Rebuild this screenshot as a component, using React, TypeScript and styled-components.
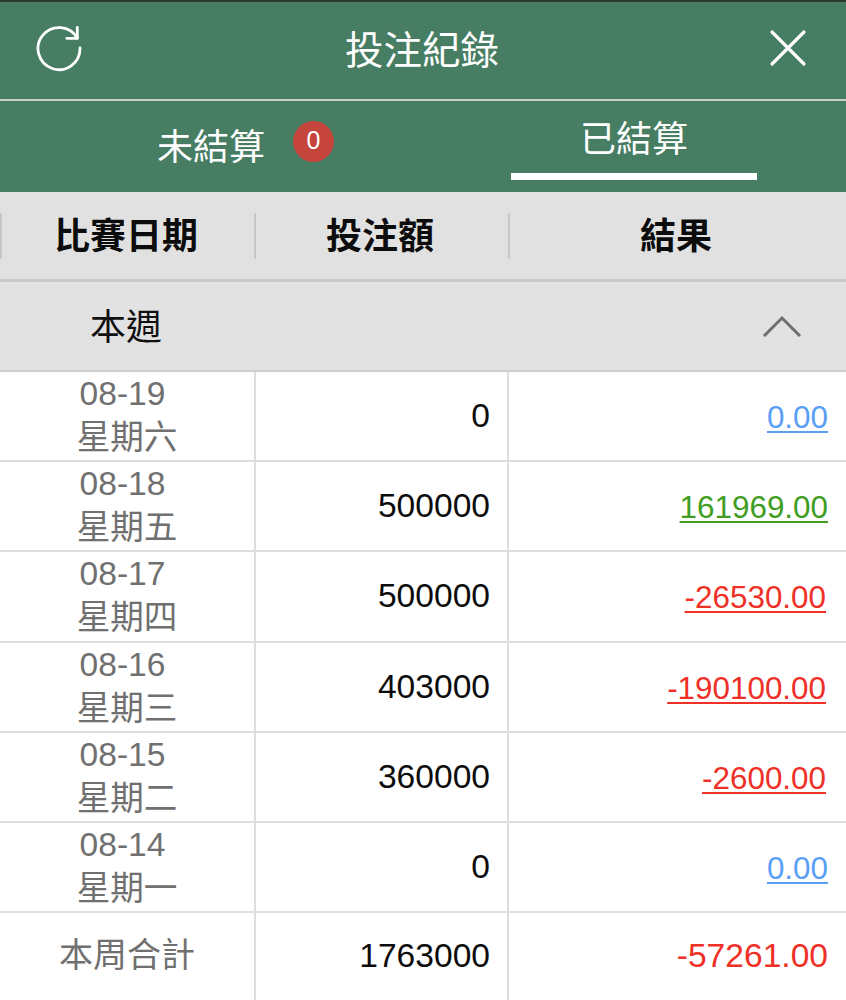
import React from 'react';
import styled, { createGlobalStyle } from 'styled-components';

const FONT = '"Liberation Sans", "Noto Sans CJK TC", sans-serif';

const GlobalStyle = createGlobalStyle`
  html, body {
    margin: 0;
    padding: 0;
    background: #ffffff;
    font-family: ${FONT};
  }
`;

const RowList = [
  { date: '08-19', day: '星期六', amount: '0', result: '0.00', tone: 'zero' },
  { date: '08-18', day: '星期五', amount: '500000', result: '161969.00', tone: 'win' },
  { date: '08-17', day: '星期四', amount: '500000', result: '-26530.00', tone: 'loss' },
  { date: '08-16', day: '星期三', amount: '403000', result: '-190100.00', tone: 'loss' },
  { date: '08-15', day: '星期二', amount: '360000', result: '-2600.00', tone: 'loss' },
  { date: '08-14', day: '星期一', amount: '0', result: '0.00', tone: 'zero' },
];

const toneColor: Record<string, string> = {
  zero: '#5a9ff5',
  win: '#3f9e22',
  loss: '#ef3026',
};

const App = () => (
  <Container>
    <GlobalStyle />
    <TopBar>
      <IconButton>
        <svg width="48" height="48" viewBox="0 0 48 48" fill="none" stroke="#fff" strokeWidth="2.8" strokeLinecap="round" strokeLinejoin="round">
          <path d="M41.3 14.3A21 21 0 1 0 44 24" />
          <path d="M41.3 3.5v10.8H30.8" />
        </svg>
      </IconButton>
      <Title>投注紀錄</Title>
      <IconButton $end>
        <svg width="40" height="40" viewBox="0 0 40 40" fill="none" stroke="#fff" strokeWidth="3.2" strokeLinecap="round">
          <path d="M4 4l32 32M36 4L4 36" />
        </svg>
      </IconButton>
    </TopBar>
    <Tabs>
      <Tab>
        <TabLabel $active={false}>
          未結算
          <Badge>0</Badge>
        </TabLabel>
      </Tab>
      <Tab>
        <TabLabel $active>已結算</TabLabel>
        <Underline />
      </Tab>
    </Tabs>
    <HeadRow>
      <HeadCell>比賽日期</HeadCell>
      <HeadCell>投注額</HeadCell>
      <HeadCell>結果</HeadCell>
    </HeadRow>
    <GroupRow>
      <GroupName>本週</GroupName>
      <svg width="40" height="22" viewBox="0 0 40 22" fill="none" stroke="#6f6f6f" strokeWidth="3">
        <path d="M2 21L20 3l18 18" />
      </svg>
    </GroupRow>
    {RowList.map((row) => (
      <Row key={row.date}>
        <DateCell>
          <DateText>{row.date}</DateText>
          <span>{row.day}</span>
        </DateCell>
        <AmountCell>{row.amount}</AmountCell>
        <ResultCell $tone={row.tone}>
          <ResultLink $tone={row.tone}>{row.result}</ResultLink>
        </ResultCell>
      </Row>
    ))}
    <Row>
      <TotalLabel>本周合計</TotalLabel>
      <AmountCell>1763000</AmountCell>
      <TotalResult>-57261.00</TotalResult>
    </Row>
  </Container>
);

const Container = styled.div`
  width: 846px;
  height: 1000px;
  overflow: hidden;
  background: #fff;
`;

const TopBar = styled.div`
  box-sizing: border-box;
  height: 101px;
  border-top: 2px solid #2b3a33;
  border-bottom: 2px solid #c9cfcb;
  background: #467d63;
  display: grid;
  grid-template-columns: 1fr auto 1fr;
  align-items: center;
  padding: 0 38px 0 36px;
`;

const IconButton = styled.div<{ $end?: boolean }>`
  display: flex;
  align-items: center;
  justify-content: ${({ $end }) => ($end ? 'flex-end' : 'flex-start')};
  margin-bottom: 5px;
`;

const Title = styled.div`
  color: #fff;
  font-size: 38.5px;
  line-height: 46px;
`;

const Tabs = styled.div`
  height: 91px;
  background: #467d63;
  display: grid;
  grid-template-columns: 423px 423px;
`;

const Tab = styled.div`
  display: flex;
  flex-direction: column;
  align-items: center;
`;

const TabLabel = styled.div<{ $active: boolean }>`
  position: relative;
  color: #fff;
  font-size: 36px;
  line-height: 42px;
  margin-top: ${({ $active }) => ($active ? '18px' : '26px')};
  margin-right: 1px;
`;

const Badge = styled.span`
  position: absolute;
  left: 136px;
  top: -6px;
  width: 41px;
  height: 41px;
  border-radius: 50%;
  background: #c5443b;
  color: #fff;
  font-size: 25px;
  line-height: 39px;
  text-align: center;
`;

const Underline = styled.div`
  width: 246px;
  height: 7px;
  margin-top: 12px;
  margin-right: 1px;
  background: #fff;
`;

const HeadRow = styled.div`
  height: 87px;
  border-bottom: 3px solid #c9c9c9;
  background: #e1e1e1;
  display: grid;
  grid-template-columns: 254px 254px 338px;
  align-items: center;
`;

const HeadCell = styled.div`
  box-sizing: border-box;
  height: 46px;
  border-left: 2px solid #c8c8c8;
  padding: 0 4px 6px 0;
  display: flex;
  align-items: center;
  justify-content: center;
  font-size: 36px;
  font-weight: 700;
  color: #0c0c0c;
`;

const GroupRow = styled.div`
  height: 88px;
  background: #e2e2e2;
  border-bottom: 2px solid #cfcfcf;
  display: flex;
  align-items: center;
  justify-content: space-between;
  padding: 0 44px 0 90px;
`;

const GroupName = styled.div`
  font-size: 36px;
  color: #111;
  padding-bottom: 4px;
`;

const Row = styled.div`
  height: 88.2px;
  border-bottom: 2px solid #dedede;
  display: grid;
  grid-template-columns: 256px 253px 337px;
`;

const DateCell = styled.div`
  box-sizing: border-box;
  display: flex;
  flex-direction: column;
  align-items: center;
  justify-content: center;
  padding-bottom: 2px;
  border-right: 2px solid #dedede;
  color: #707070;
  font-size: 33.6px;
  line-height: 44px;
`;

const DateText = styled.span`
  padding-right: 9px;
`;

const AmountCell = styled.div`
  box-sizing: border-box;
  display: flex;
  align-items: center;
  justify-content: flex-end;
  padding-right: 17px;
  padding-bottom: 2px;
  border-right: 2px solid #dedede;
  color: #0c0c0c;
  font-size: 33.6px;
`;

const ResultCell = styled.div<{ $tone: string }>`
  display: flex;
  align-items: center;
  justify-content: flex-end;
  padding-right: ${({ $tone }) => ($tone === 'loss' ? '20px' : '18px')};
  padding-top: 2px;
  font-size: 31.4px;
`;

const ResultLink = styled.span<{ $tone: string }>`
  color: ${({ $tone }) => toneColor[$tone]};
  text-decoration: underline;
  text-decoration-thickness: 2px;
  text-underline-offset: 3px;
`;

const TotalLabel = styled.div`
  box-sizing: border-box;
  display: flex;
  align-items: center;
  justify-content: center;
  border-right: 2px solid #dedede;
  color: #707070;
  font-size: 34px;
  padding-bottom: 10px;
`;

const TotalResult = styled.div`
  display: flex;
  align-items: center;
  justify-content: flex-end;
  padding-right: 18px;
  padding-bottom: 2px;
  color: #ef3026;
  font-size: 33.6px;
`;

export default App;
